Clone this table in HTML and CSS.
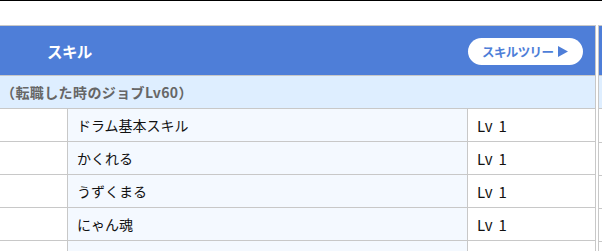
FILE: index.html
```html
<!DOCTYPE html>
<html lang="ja">
<head>
<meta charset="utf-8">
<link rel="stylesheet" href="styles.css">
</head>
<body>
<div class="topbar"></div>
<div class="panels">
  <div class="panel main">
    <div class="head">
      <span class="title">スキル</span>
      <span class="tree-btn">スキルツリー <svg class="tri" width="10" height="11" viewBox="0 0 10 11"><path d="M0 0 L10 5.5 L0 11 Z" fill="#4e7ed8"/></svg></span>
    </div>
    <div class="sub">（転職した時のジョブLv60）</div>
    <div class="row"><div class="c1"></div><div class="c2">ドラム基本スキル</div><div class="c3">Lv 1</div></div>
    <div class="row"><div class="c1"></div><div class="c2">かくれる</div><div class="c3">Lv 1</div></div>
    <div class="row"><div class="c1"></div><div class="c2">うずくまる</div><div class="c3">Lv 1</div></div>
    <div class="row"><div class="c1"></div><div class="c2">にゃん魂</div><div class="c3">Lv 1</div></div>
    <div class="row"><div class="c1"></div><div class="c2"></div><div class="c3"></div></div>
  </div>
  <div class="panel side">
    <div class="head"></div>
    <div class="sub"></div>
    <div class="srow"></div>
    <div class="srow"></div>
    <div class="srow"></div>
    <div class="srow"></div>
    <div class="srow"></div>
  </div>
</div>
</body>
</html>
```
FILE: styles.css
```css
html, body {
  margin: 0;
  padding: 0;
  background: #fff;
  font-family: "Noto Sans CJK JP", "Noto Sans", sans-serif;
  overflow: hidden;
}
.topbar {
  height: 24px;
  border-top: 1px solid #000;
}
.panels {
  display: flex;
  gap: 2px;
  height: 226px;
  overflow: hidden;
}
.panel {
  border-top: 1px solid #c8c8c8;
  border-right: 1px solid #c8c8c8;
}
.main {
  width: 595px;
  flex: none;
}
.side {
  flex: 1;
  border-left: 1px solid #c8c8c8;
  border-right: none;
}
.head {
  height: 49px;
  background: #4e7ed8;
  display: flex;
  align-items: center;
  justify-content: space-between;
  padding: 0 12px 0 47px;
  border-bottom: 1px solid #c8c8c8;
}
.title {
  color: #fff;
  font-weight: 700;
  font-size: 15.5px;
  letter-spacing: -0.6px;
}
.tree-btn {
  display: flex;
  align-items: center;
  height: 27px;
  width: 115px;
  box-sizing: border-box;
  padding-left: 14px;
  border-radius: 14px;
  background: #fff;
  color: #4e7ed8;
  font-size: 12.5px;
  font-weight: 700;
  letter-spacing: -0.6px;
  gap: 5px;
  margin-top: 1px;
}
.tri { display: block; }
.sub {
  height: 32px;
  background: #deeeff;
  border-bottom: 1px solid #c8c8c8;
  display: flex;
  align-items: center;
  padding-left: 1px;
  color: #666;
  font-weight: 700;
  font-size: 14px;
  letter-spacing: 0.4px;
}
.row {
  display: flex;
  height: 32px;
  border-bottom: 1px solid #c8c8c8;
  font-size: 14px;
  color: #111;
}
.row > div {
  display: flex;
  align-items: center;
}
.c1 {
  width: 67px;
  background: #fff;
  border-right: 1px solid #c8c8c8;
}
.c2 {
  width: 390px;
  padding-left: 9px;
  background: #f4f9ff;
  border-right: 1px solid #c8c8c8;
}
.c3 {
  flex: 1;
  padding-left: 9px;
  background: #fff;
  font-size: 15px;
  word-spacing: 2px;
  letter-spacing: 0.3px;
}
.side .head { padding: 0; }
.srow {
  height: 32px;
  border-bottom: 1px solid #c8c8c8;
  margin-top: 1px;
  margin-bottom: -1px;
}
```
